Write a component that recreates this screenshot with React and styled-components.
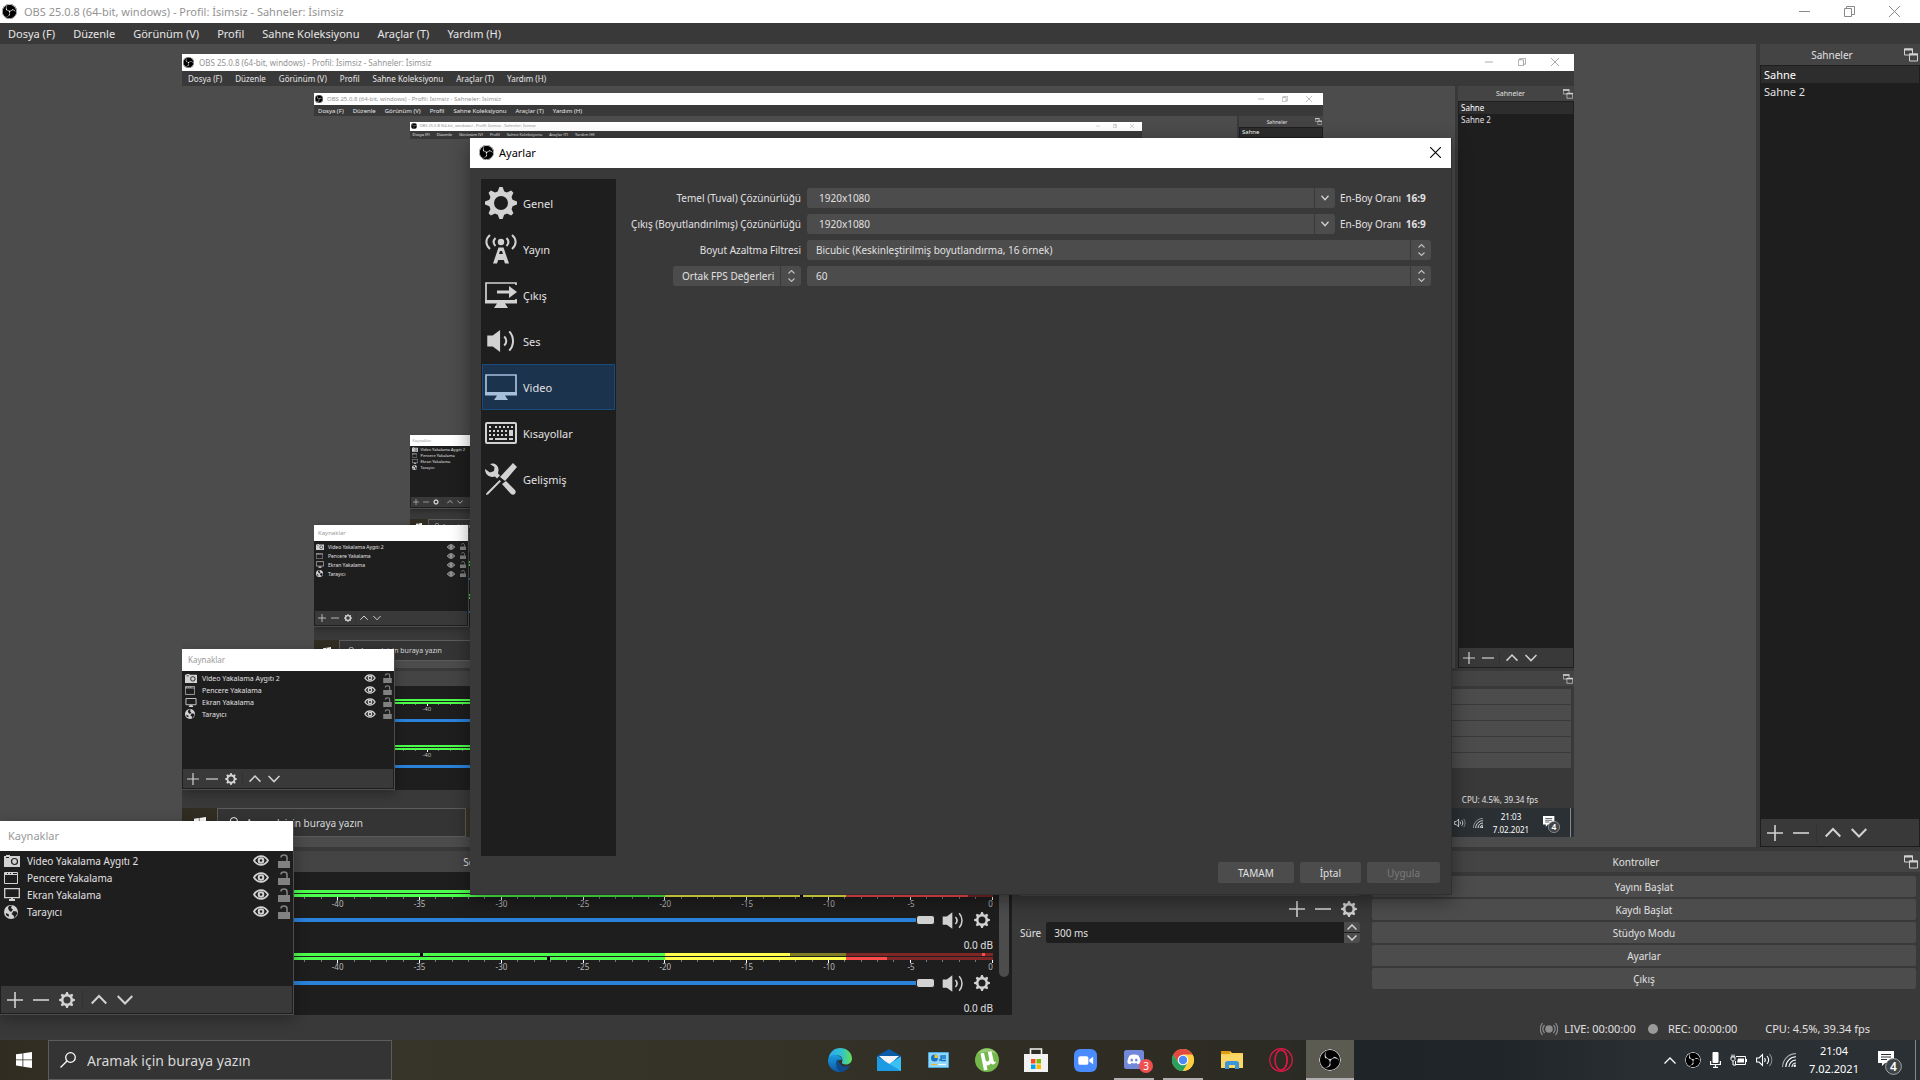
import React, { useId } from "react";
import styled, { createGlobalStyle, css, ThemeProvider, useTheme } from "styled-components";
import { SiObsstudio } from "react-icons/si";

/* Every desktop is drawn at a zoom level; px() turns a full-size length into
   whole pixels at the level of the desktop that it is used in. */
const px = (...ns) => (p) => ns.map((n) => `${p.theme.s(n)}px`).join(" ");
const makeTheme = (level) => {
  const k = Math.pow(0.725, level);
  return { level, s: (n) => (n === 0 ? 0 : Math.sign(n) * Math.max(1, Math.round(Math.abs(n) * k))) };
};

const color = {
  panel: "#3a393a",
  canvas: "#4c4c4c",
  dark: "#1f1e1f",
  header: "#444444",
  text: "#e1e0e1",
  icon: "#d2d2d2",
};

const Global = createGlobalStyle`
  *, *::before, *::after { box-sizing: border-box; }
  html, body { margin: 0; height: 100%; overflow: hidden; background: ${color.panel}; }
  #root { height: 100%; }
  button, input, select { font: inherit; color: inherit; border: 0; padding: 0; margin: 0; background: none; border-radius: 0; min-width: 0; outline: 0; }
  ul { list-style: none; margin: 0; padding: 0; }
  h1, h2 { margin: 0; font: inherit; }
  svg { display: block; flex: none; }
`;

/* ---------- shared parts ---------- */

const Svg = styled.svg`
  width: ${(p) => p.theme.s(p.$w)}px;
  height: ${(p) => p.theme.s(p.$h || p.$w)}px;
`;

const TextButton = styled.button`
  display: flex;
  align-items: center;
  justify-content: center;
  white-space: nowrap;
`;

const PushButton = styled(TextButton)`
  height: ${px(21)};
  background: ${color.canvas};
  color: ${color.text};
  border-radius: ${px(2)};
  font-size: ${px(10)};
  padding: ${px(0, 20)};
  &:disabled { color: #7a7a7a; }
`;

const teeth = [0, 45, 90, 135, 180, 225, 270, 315];
const Gear = ({ w }) => (
  <Svg $w={w} viewBox="0 0 32 32" fill="currentColor">
    {teeth.map((a) => (
      <path key={a} d="M14.400 0h3.200l2.600 7h-8.400z" transform={`rotate(${a} 16 16)`} />
    ))}
    <circle cx="16" cy="16" r="9.500" fill="none" stroke="currentColor" strokeWidth="5" />
  </Svg>
);
const Plus = () => <Svg $w={16} viewBox="0 0 16 16" stroke="currentColor" strokeWidth="1.600"><path d="M0 8h16M8 0v16" /></Svg>;
const Minus = () => <Svg $w={16} viewBox="0 0 16 16" stroke="currentColor" strokeWidth="1.600"><path d="M0 8h16" /></Svg>;
const Up = () => <Svg $w={16} viewBox="0 0 16 16" fill="none" stroke="currentColor" strokeWidth="2"><path d="M.7 11.500L8 4l7.300 7.500" /></Svg>;
const Down = () => <Svg $w={16} viewBox="0 0 16 16" fill="none" stroke="currentColor" strokeWidth="2"><path d="M.7 4L8 11.500 15.300 4" /></Svg>;
const Speaker = ({ w, h }) => (
  <Svg $w={w} $h={h} viewBox="0 0 32 24" fill="none" stroke="currentColor" strokeWidth="2.200">
    <path d="M1 6h6l8-6v24l-8-6H1z" fill="currentColor" stroke="none" />
    <path d="M19.500 7c3 3 3 7 0 10M25 1.500c5.500 6 5.500 15 0 21" />
  </Svg>
);

const LogoBox = styled.span`
  display: flex;
  flex: none;
  width: ${(p) => p.theme.s(p.$w)}px;
  height: ${(p) => p.theme.s(p.$w)}px;
  border-radius: 50%;
  background: #000;
  color: ${(p) => p.$ink || "#fff"};
  overflow: hidden;
  svg { width: 100%; height: 100%; }
`;
const Logo = ({ w = 15, ink }) => <LogoBox $w={w} $ink={ink}><SiObsstudio /></LogoBox>;

/* ---------- window title and menu ---------- */

const TitleBar = styled.header`
  display: flex;
  align-items: center;
  flex: none;
  height: ${px(23)};
  padding: ${px(0, 20, 1, 2)};
  background: #fff;
  color: #939393;
  h1 { flex: 1; margin-left: ${px(7)}; font-size: ${px(11)}; white-space: nowrap; }
`;
const WindowControls = styled.div`
  display: flex;
  align-items: center;
  gap: ${px(34)};
  button { display: flex; }
`;
const MenuBar = styled.nav`
  display: flex;
  align-items: center;
  flex: none;
  gap: ${px(18)};
  height: ${px(21)};
  padding: ${px(0, 8)};
  background: ${color.panel};
  color: #e6e6e6;
  font-size: ${px(11)};
`;

function MainTitle() {
  return (
    <TitleBar>
      <Logo />
      <h1>OBS 25.0.8 (64-bit, windows) - Profil: İsimsiz - Sahneler: İsimsiz</h1>
      <WindowControls>
        <button aria-label="Simge durumuna küçült"><Svg $w={11} viewBox="0 0 11 11" stroke="#8a8a8a"><path d="M0 5.500h11" /></Svg></button>
        <button aria-label="Önceki boyut"><Svg $w={11} viewBox="0 0 11 11" fill="none" stroke="#8a8a8a"><path d="M.5 2.500h7v8h-7zM2.500 2.500v-2h8v8h-3" /></Svg></button>
        <button aria-label="Kapat"><Svg $w={11} viewBox="0 0 11 11" stroke="#8a8a8a"><path d="M0 0l11 11M11 0L0 11" /></Svg></button>
      </WindowControls>
    </TitleBar>
  );
}

const menus = ["Dosya (F)", "Düzenle", "Görünüm (V)", "Profil", "Sahne Koleksiyonu", "Araçlar (T)", "Yardım (H)"];

/* ---------- docks ---------- */

const Dock = styled.section`
  display: flex;
  flex-direction: column;
  min-width: 0;
  min-height: 0;
`;
const DockHeader = styled.header`
  display: flex;
  align-items: center;
  flex: none;
  height: ${px(21)};
  background: ${color.header};
  color: ${color.text};
  font-size: ${px(10)};
  h2 { flex: 1; text-align: center; white-space: nowrap; }
  button { display: flex; margin-right: ${px(2)}; }
`;
function DockTitle({ children }) {
  return (
    <DockHeader>
      <h2>{children}</h2>
      <button aria-label="Ayır">
        <Svg $w={14} viewBox="0 0 14 14" fill="none" stroke="#d2d2d2">
          <path d="M.5 1h8v6h-8z" /><path d="M0 1.500h9" strokeWidth="2" />
          <path d="M5.500 6h8v7h-8z" fill="#444" /><path d="M5 6.500h9" strokeWidth="2" />
        </Svg>
      </button>
    </DockHeader>
  );
}

const Toolbar = styled.div`
  display: flex;
  align-items: center;
  flex: none;
  gap: ${px(10)};
  height: ${px(28)};
  padding: ${px(0, 6)};
  border: 1px solid ${color.dark};
  border-top: 0;
  background: ${color.panel};
  color: ${color.icon};
  button { display: flex; }
`;
const Divider = styled.span`
  width: 2px;
  height: ${px(19)};
  margin: ${px(0, -3)};
  border-left: 1px solid #323232;
`;

const SceneList = styled.ul`
  flex: 1;
  padding: 1px;
  background: ${color.dark};
  color: ${color.text};
  font-size: ${px(11)};
`;
const SceneButton = styled.button`
  display: block;
  width: 100%;
  height: ${px(17)};
  line-height: ${px(17)};
  padding: ${px(0, 3)};
  text-align: left;
  background: ${(p) => (p.$current ? "#2d2d2d" : "transparent")};
  color: ${(p) => (p.$current ? "#fff" : "inherit")};
`;

const Workspace = styled.div`
  display: flex;
  flex: 1;
  min-height: 0;
  gap: ${px(4)};
`;
const Preview = styled.div`
  display: flex;
  align-items: center;
  justify-content: center;
  flex: 1;
  min-width: 0;
  background: ${color.canvas};
  overflow: hidden;
`;
const ScenesDock = styled(Dock)`
  width: ${px(160)};
`;
const BottomDocks = styled.div`
  display: grid;
  grid-template-columns: 1012fr 348fr 552fr;
  gap: ${px(4)};
  height: ${px(164)};
  margin-top: ${px(4)};
  flex: none;
`;

/* ---------- mixer ---------- */

const MixerBody = styled.div`
  display: flex;
  flex: 1;
  min-height: 0;
  padding: ${px(0, 3, 0, 10)};
  gap: ${px(6)};
  background: ${color.dark};
  color: ${color.text};
  overflow: hidden;
`;
const Channels = styled.div`
  display: flex;
  flex-direction: column;
  flex: 1;
  min-width: 0;
`;
const ScrollThumb = styled.span`
  width: ${px(10)};
  height: ${px(105)};
  border-radius: ${px(5)};
  background: ${color.canvas};
`;
const Channel = styled.div`
  display: flex;
  flex-direction: column;
  flex: none;
  height: ${px(63)};
`;
const Decibels = styled.output`
  display: block;
  flex: none;
  height: ${px(18)};
  line-height: ${px(20)};
  font-size: ${px(10)};
  text-align: right;
`;
const Bars = styled.div`
  display: grid;
  gap: 1px;
  span { height: ${px(3)}; }
`;
const Ticks = styled.div`
  display: flex;
  justify-content: space-between;
  align-items: flex-start;
  height: ${px(3)};
`;
const Tick = styled.span`
  width: 1px;
  height: ${(p) => p.theme.s(p.$major ? 3 : 2)}px;
  background: ${(p) => (p.$major ? "#ffffff" : "#7a7a7a")};
`;
const Scale = styled.div`
  display: flex;
  justify-content: space-between;
  height: ${px(8)};
  line-height: ${px(8)};
  font-size: ${px(8)};
  color: #b8b8b8;
  span { display: flex; justify-content: center; width: 0; }
  span:last-child { justify-content: flex-end; }
`;
const VolumeRow = styled.div`
  display: flex;
  align-items: center;
  height: ${px(24)};
  gap: ${px(7)};
  padding-right: ${px(3)};
  color: ${color.icon};
  button { display: flex; }
  button:last-child { margin-left: ${px(3)}; }
`;
const Volume = styled.input`
  flex: 1;
  appearance: none;
  height: ${px(10)};
  &::-webkit-slider-runnable-track { height: ${px(4)}; background: #2a82da; }
  &::-webkit-slider-thumb {
    appearance: none;
    width: ${px(19)};
    height: ${px(10)};
    margin-top: ${px(-3)};
    border-radius: ${px(3)};
    border: 1px solid ${color.dark};
    background: ${color.icon};
  }
`;

const at = (db) => `${((60 + db) / 60) * 100}%`;
/* level: how far the bar is lit; peak: where its marker sits, and the marker's colour */
const barPaint = ({ level, peak }) => {
  const stops = [];
  const zones = [[-60, -20, "#4cff4c", "#267f26"], [-20, -9, "#ffff4c", "#7f7f26"], [-9, 0, "#ff4c4c", "#7f2626"]];
  zones.forEach(([from, to, lit, dim]) => {
    const mid = Math.min(Math.max(level, from), to);
    stops.push(`${lit} ${at(from)} ${at(mid)}`, `${dim} ${at(mid)} ${at(to)}`);
  });
  const layers = [`linear-gradient(90deg, ${stops.join(", ")})`];
  if (peak) {
    const [db, ink] = peak;
    layers.unshift(`linear-gradient(90deg, transparent ${at(db)}, ${ink} ${at(db)} ${at(db + 0.18)}, transparent ${at(db + 0.18)})`);
  }
  return { backgroundImage: layers.join(", ") };
};
const ClipMark = styled.i`
  display: block;
  width: ${px(3)};
  height: 100%;
  margin-left: auto;
  margin-right: ${px(8)};
  background: #ff4c4c;
`;
const channels = [
  { name: "Masaüstü Sesi", bars: [{ level: -3 }, { level: -4 + 2.5, peak: [-11.8, "#000"] }] },
  { name: "Mic/Aux", bars: [{ level: -12.4, peak: [-35, "#000"], clip: true }, { level: -6.5, peak: [-27.2, "#000"] }] },
];
const labels = Array.from({ length: 13 }, (_, i) => i * 5 - 60);

const MixerChannel = ({ name, bars }) => (
  <Channel>
    <Decibels>0.0 dB</Decibels>
    <Bars>{bars.map((b, i) => <span key={i} style={barPaint(b)}>{b.clip && <ClipMark />}</span>)}</Bars>
    <Ticks>{Array.from({ length: 61 }, (_, i) => <Tick key={i} $major={i % 5 === 0} />)}</Ticks>
    <Scale>{labels.map((l) => <span key={l}>{l}</span>)}</Scale>
    <VolumeRow>
      <Volume type="range" defaultValue="100" aria-label={name} />
      <button aria-label="Sessiz"><Speaker w={22} h={17} /></button>
      <button aria-label="Ses ayarları"><Gear w={16} /></button>
    </VolumeRow>
  </Channel>
);

const Transitions = styled.div`
  display: flex;
  flex-direction: column;
  gap: ${px(2)};
  padding: ${px(3, 4)};
  color: ${color.text};
`;
const TransitionTools = styled.div`
  display: flex;
  align-items: center;
  justify-content: flex-end;
  gap: ${px(10)};
  height: ${px(22)};
  padding-right: ${px(3)};
  color: ${color.icon};
  button { display: flex; }
`;
const DurationRow = styled.div`
  display: flex;
  align-items: center;
  gap: ${px(5)};
  height: ${px(21)};
  font-size: ${px(10)};
`;
const SpinBox = styled.div`
  display: flex;
  flex: 1;
  height: 100%;
  border-radius: ${px(2)};
  overflow: hidden;
  background: ${color.dark};
  input { flex: 1; padding-left: ${px(8)}; }
`;
const SpinButtons = styled.div`
  display: grid;
  grid-template-rows: 1fr 1fr;
  gap: 1px;
  width: ${px(16)};
  button { display: grid; place-items: center; background: ${color.canvas}; color: ${color.icon}; }
`;
const ControlsBody = styled.div`
  display: flex;
  flex-direction: column;
  gap: ${px(2)};
  padding: ${px(4)};
`;

/* ---------- status bar ---------- */

const StatusBar = styled.footer`
  display: flex;
  align-items: center;
  justify-content: flex-end;
  flex: none;
  height: ${px(25)};
  padding: ${px(2, 50, 0, 0)};
  color: ${color.text};
  font-size: ${px(11)};
  white-space: nowrap;
`;
const StatusItem = styled.span`
  display: flex;
  align-items: center;
  gap: ${(p) => p.theme.s(p.$gap || 0)}px;
  margin-left: ${(p) => p.theme.s(p.$before || 0)}px;
`;

/* ---------- taskbar ---------- */

const TaskBar = styled.footer`
  display: flex;
  flex: none;
  height: ${px(40)};
  color: #fff;
  background: linear-gradient(90deg, #302c21 0%, #37342a 10%, #353328 40%, #2f2d23 55%, #2d2c24 67%, #1e2428 71%, #202529 78%, #2a2f33 86%, #2b3034 100%);
`;
const StartButton = styled(TextButton)`
  width: ${px(48)};
`;
const SearchBox = styled.label`
  display: flex;
  align-items: center;
  gap: ${px(11)};
  width: ${px(344)};
  padding: ${px(0, 11)};
  border: 1px solid #5c5c5b;
  background: #343434;
  color: #d8d8d8;
  font-size: ${px(14)};
  input { flex: 1; &::placeholder { color: #d8d8d8; opacity: 1; } }
`;
const Pinned = styled.div`
  display: flex;
  flex: 1;
  gap: ${px(1)};
  padding-left: ${px(424)};
`;
const AppButton = styled(TextButton)`
  position: relative;
  flex: none;
  width: ${px(48)};
  background: ${(p) => (p.$active ? "#5c5b51" : "transparent")};
  ${(p) => (p.$open || p.$active) && css`
    &::after {
      content: "";
      position: absolute;
      bottom: 0;
      left: ${p.theme.s(p.$active ? 0 : 4)}px;
      right: ${p.theme.s(p.$active ? 0 : 4)}px;
      height: ${p.theme.s(2)}px;
      background: #b3aeb2;
    }
  `}
`;
const Badge = styled.span`
  position: absolute;
  right: ${px(5)};
  bottom: ${px(7)};
  width: ${px(14)};
  height: ${px(14)};
  line-height: ${px(14)};
  border-radius: 50%;
  background: #f04f50;
  font-size: ${px(10)};
  text-align: center;
`;
const Tray = styled.div`
  display: flex;
  align-items: center;
  gap: ${px(9)};
`;
const Clock = styled.time`
  width: ${px(58)};
  line-height: ${px(18)};
  text-align: center;
  font-size: ${px(11)};
`;
const ActionCenter = styled(TextButton)`
  margin-left: ${px(6)};
  margin-right: ${px(4)};
  padding-top: ${px(6)};
`;
const ShowDesktop = styled.button`
  align-self: stretch;
  width: ${px(5)};
  border-left: 1px solid #85888a;
`;

const EdgeIcon = () => {
  const id = useId();
  return (
    <Svg $w={24} viewBox="0 0 24 24">
      <defs>
        <linearGradient id={`${id}a`}><stop offset=".2" stopColor="#2fb0ea" /><stop offset=".6" stopColor="#34c6c4" /><stop offset="1" stopColor="#66df52" /></linearGradient>
        <linearGradient id={`${id}b`} x2="0" y2="1"><stop stopColor="#1b9de2" /><stop offset="1" stopColor="#0c59a4" /></linearGradient>
      </defs>
      <path d="M.6 10C1.800 4 6.400 0 12 0c7 0 12 5 12 10.500 0 3.500-2.500 6-6 6-3 0-4.500-1.200-4-2.200C15.500 11 13.500 7.500 9.500 7.200 5.500 7 2 8 .6 10z" fill={`url(#${id}a)`} />
      <path d="M0 12c.5-4 4.500-5.800 8.500-5 3.500.6 5.500 3 5.500 5-5-2-7 6 0 9.500l1.500 1.800C14 24 13 24 12 24 5 24-.5 18.500 0 12z" fill={`url(#${id}b)`} />
      <path d="M8 15c0-2 1.200-3.500 2.500-4-1 4 3.500 8 8 7.500 1.500-.2 2.500-1 3.500-1-2 4-6 6.500-10 6.500-2.500-1.500-4-5-4-9z" fill="#114a8b" />
    </Svg>
  );
};

const apps = [
  ["Edge", EdgeIcon],
  ["Posta", () => (
    <Svg $w={24} $h={22} viewBox="0 0 24 22">
      <path d="M0 7L12 0l12 7v15H0z" fill="#0a5ba8" />
      <path d="M2 7h20L12 16z" fill="#f4f4f8" />
      <path d="M0 7.500L12 15l12-7.500V22H0z" fill="#39c0f5" />
      <path d="M0 7.500L24 22H0z" fill="#1d9ae4" />
    </Svg>)],
  ["Denetim Masası", () => (
    <Svg $w={21} $h={16} viewBox="0 0 21 16">
      <rect width="21" height="16" rx="1" fill="#4aa9e0" /><rect x="1" y="1" width="19" height="14" fill="#8ed6fb" />
      <circle cx="6.500" cy="6" r="3.500" fill="#1673c4" /><path d="M6.500 6V2.500A3.500 3.500 0 0 1 10 6z" fill="#fbc02d" />
      <path d="M11 8h2V4h5M13 6h5M13 8.500h5" stroke="#1673c4" strokeWidth="1.300" fill="none" />
      <path d="M3 12.500h6" stroke="#f5b32f" strokeWidth="1.200" /><path d="M10 12.500h8" stroke="#e8fbff" strokeWidth="1.200" />
    </Svg>)],
  ["µTorrent", () => (
    <Svg $w={24} viewBox="0 0 24 24">
      <circle cx="12" cy="12" r="12" fill="#74b74a" /><path d="M2 6a12 12 0 0 1 20 0C17 4 8 3 2 6z" fill="#97cb75" />
      <path d="M5.500 5.500l3.500-.8 1.500 7c.6 2.800 4.200 2 3.600-1.200L12.800 4l3.700-.8 2 9c.4 1.500 1 2 2.500 1.600-.3 2.400-3.600 3.700-5.200 1.400-1 2-2.800 2.500-4.300 2l1 4.500-3.500.8z" fill="#fff" />
    </Svg>)],
  ["Microsoft Store", () => (
    <Svg $w={24} viewBox="0 0 24 24">
      <path d="M6.500 8V1h11v7" fill="none" stroke="#f2f2f2" strokeWidth="1.600" /><path d="M0 6h24v18H0z" fill="#f2f2f2" />
      <path d="M7 11h4.500v4.500H7z" fill="#f25022" /><path d="M12.500 11H17v4.500h-4.500z" fill="#7fba00" />
      <path d="M7 16.500h4.500V21H7z" fill="#00a4ef" /><path d="M12.500 16.500H17V21h-4.500z" fill="#ffb900" />
    </Svg>)],
  ["Zoom", () => (
    <Svg $w={23} viewBox="0 0 24 24">
      <rect width="24" height="24" rx="6.500" fill="#4a8cff" /><rect x="4.500" y="7.500" width="10.500" height="9" rx="2" fill="#fff" /><path d="M16 11l4-3v8l-4-3z" fill="#fff" />
    </Svg>)],
  ["Discord", () => (
    <Svg $w={20} viewBox="0 0 20 20">
      <rect width="20" height="19" rx="2.500" fill="#7289da" />
      <path d="M5.500 5.500c3-1.300 6-1.300 9 0 1.500 2.500 2.200 5 2 7.500-1 .8-2 1.200-3 1.300l-.8-1.200c-2 .5-3.400.5-5.400 0l-.8 1.200c-1-.1-2-.5-3-1.300-.2-2.500.5-5 2-7.500z" fill="#fff" />
      <ellipse cx="7.700" cy="10" rx="1.300" ry="1.500" fill="#7289da" /><ellipse cx="12.300" cy="10" rx="1.300" ry="1.500" fill="#7289da" />
    </Svg>), { open: true, badge: "3" }],
  ["Chrome", () => (
    <Svg $w={22} viewBox="0 0 24 24">
      <circle cx="12" cy="12" r="12" fill="#fdcf3f" />
      <path d="M1.600 6A12 12 0 0 1 22.400 6H12z" fill="#e14b3f" /><path d="M1.600 6a12 12 0 0 1 10.400-6v6.500L6.800 15z" fill="#e14b3f" />
      <path d="M1.600 6A12 12 0 0 0 12 24l5.200-9H6.800z" fill="#27a060" /><path d="M12 6.500h10.600A12 12 0 0 1 12 24l5-9z" fill="#fdcf3f" />
      <circle cx="12" cy="12" r="5.800" fill="#fff" /><circle cx="12" cy="12" r="4.600" fill="#4c8bf5" />
    </Svg>), { open: true }],
  ["Dosya Gezgini", () => (
    <Svg $w={22} $h={18} viewBox="0 0 22 18">
      <path d="M0 0h9l2 2h11v15H0z" fill="#f9cf54" /><path d="M0 0h9v3H0z" fill="#e09c10" /><path d="M0 4h22v13H0z" fill="#fcd768" />
      <path d="M4 18v-6.500L6 10h10l2 1.500V18h-4v-4H8v4z" fill="#3a97d8" />
    </Svg>)],
  ["Opera", () => (
    <Svg $w={24} viewBox="0 0 24 24" fill="none" stroke="#e01848">
      <circle cx="12" cy="12" r="11.300" strokeWidth="1.200" /><ellipse cx="12" cy="12" rx="6" ry="10" strokeWidth="1.400" /><path d="M13 2c7 3 7 17 0 20" strokeWidth="1.200" />
    </Svg>)],
  ["OBS Studio", () => <Logo w={22} ink="#cfcfcf" />, { active: true }],
];

const ArrowUp = () => <Svg $w={12} $h={7} viewBox="0 0 12 7" fill="none" stroke="#fff" strokeWidth="1.300"><path d="M.5 6.500L6 1l5.500 5.500" /></Svg>;

function Taskbar({ time }) {
  return (
    <TaskBar>
      <StartButton aria-label="Başlat">
        <Svg $w={16} viewBox="0 0 16 16" fill="#fff"><path d="M0 2.300L6.500 1.400V7.500H0zM7.300 1.300L16 0v7.500H7.300zM0 8.300h6.500v6.200L0 13.600zM7.300 8.300H16V16l-8.700-1.300z" /></Svg>
      </StartButton>
      <SearchBox>
        <Svg $w={16} viewBox="0 0 16 16" fill="none" stroke="#fff" strokeWidth="1.300"><circle cx="10.500" cy="5.500" r="4.800" /><path d="M7 9L.5 15.500" /></Svg>
        <input placeholder="Aramak için buraya yazın" aria-label="Ara" />
      </SearchBox>
      <Pinned>
        {apps.map(([name, Icon, o = {}]) => (
          <AppButton key={name} aria-label={name} $open={o.open} $active={o.active}>
            <Icon />
            {o.badge && <Badge>{o.badge}</Badge>}
          </AppButton>
        ))}
      </Pinned>
      <Tray>
        <ArrowUp />
        <Logo w={16} />
        <Svg $w={11} $h={16} viewBox="0 0 11 16" fill="#fff"><rect x="2.500" width="6" height="11" rx="1" /><path d="M.6 9v3.500h9.800V9M5.500 12.500V15M3 15.300h5" fill="none" stroke="#fff" strokeWidth="1.200" /></Svg>
        <Svg $w={17} $h={12} viewBox="0 0 17 12" fill="none" stroke="#fff"><path d="M6 2.500h9.500v8h-10V7" /><path d="M8 4.500h6v4H7z" fill="#fff" stroke="none" /><path d="M16.500 5v3M1 3h4v2.500L3.500 7H2.500L1 5.500zM2 3V.5M4 3V.5M3 7v4h3" /></Svg>
        <Svg $w={17} $h={14} viewBox="0 0 17 14" fill="none" stroke="#fff" strokeWidth="1.100"><path d="M.6 5h2.500L6.500 1.500v11L3.100 9H.6zM8.500 5c1 1.200 1 2.800 0 4M11 3c2 2.400 2 5.600 0 8" /><path d="M13.500 1c3 3.600 3 8.400 0 12" opacity=".5" /></Svg>
        <Svg $w={14} viewBox="0 0 14 14" fill="none" stroke="#fff" strokeWidth="1.100"><path d="M.6 14C.6 6.600 6.600.6 14 .6" opacity=".6" /><path d="M3.800 14C3.800 8.400 8.400 3.800 14 3.800M7 14c0-3.900 3.100-7 7-7M10 14c0-2.200 1.800-4 4-4" /><circle cx="12.800" cy="12.800" r="1.200" fill="#fff" stroke="none" /></Svg>
        <Clock>{time}<br />7.02.2021</Clock>
        <ActionCenter aria-label="Bildirimler">
          <Svg $w={24} viewBox="0 0 24 24">
            <path d="M0 0h16v12H7l-3 3v-3H0z" fill="#fff" /><path d="M3 3.500h10M3 6h10M3 8.500h6" stroke="#2a2f33" />
            <circle cx="15.500" cy="15.500" r="7.900" fill="#3f4447" stroke="#a4a6a7" />
            <text x="15.500" y="20" textAnchor="middle" fill="#fff" fontSize="12" fontWeight="600">4</text>
          </Svg>
        </ActionCenter>
        <ShowDesktop aria-label="Masaüstünü göster" />
      </Tray>
    </TaskBar>
  );
}

/* ---------- sources window ---------- */

const SourcesWindow = styled.section`
  position: absolute;
  left: 0;
  bottom: ${px(65)};
  display: flex;
  flex-direction: column;
  width: ${px(294)};
  height: ${px(194)};
  border: 1px solid #4d4d4d;
  border-width: 0 1px 1px 0;
  background: ${color.dark};
  box-shadow: 0 ${px(4)} ${px(14)} rgba(0, 0, 0, 0.3);
  h2 {
    flex: none;
    height: ${px(30)};
    line-height: ${px(30)};
    padding-left: ${px(8)};
    background: #fff;
    color: #999999;
    font-size: ${px(11)};
  }
  ul { flex: 1; padding-top: ${px(1)}; }
`;
const SourceRow = styled.li`
  display: flex;
  align-items: center;
  height: ${px(17)};
  padding: ${px(0, 3, 0, 4)};
  color: ${color.icon};
  button { display: flex; }
`;
const SourceIcon = styled.span`
  display: flex;
  flex: none;
  width: ${px(23)};
`;
const SourceName = styled.span`
  flex: 1;
  white-space: nowrap;
  color: ${color.text};
  font-size: ${px(10)};
`;
const LockButton = styled.button`
  margin-left: ${px(9)};
  color: #818181;
`;
const sources = [
  ["Video Yakalama Aygıtı 2", <Svg $w={16} $h={12} viewBox="0 0 16 12" fill="currentColor"><path d="M0 1h2V0h4v1h10v11H0z" /><circle cx="10.500" cy="6.500" r="3" fill="none" stroke="#1f1f1f" strokeWidth="1.200" /><path d="M2 2.500h3" stroke="#1f1f1f" /></Svg>],
  ["Pencere Yakalama", <Svg $w={14} $h={12} viewBox="0 0 14 12" fill="none" stroke="currentColor"><path d="M.5.5h13v11H.5zM.5 2.500h13" /><path d="M1 1.500h8" strokeDasharray="2 1" /></Svg>],
  ["Ekran Yakalama", <Svg $w={16} $h={13} viewBox="0 0 16 13" fill="none" stroke="currentColor"><path d="M.7.7h14.600v9H.7z" strokeWidth="1.300" /><path d="M5 12h6M8 10v2" strokeWidth="2" /></Svg>],
  ["Tarayıcı", <Svg $w={14} viewBox="0 0 14 14"><circle cx="7" cy="7" r="7" fill="currentColor" /><path d="M5 1l3-.5L7 3l2 1.500L7 7 5 5.500 4 3zM9.500 6l3 .5 1 2-3 4.500-1-2.500-2-1.500zM2 8l3 1.500L4.500 12 2 10z" fill="#1f1f1f" /></Svg>],
];

function Sources() {
  return (
    <SourcesWindow>
      <h2>Kaynaklar</h2>
      <ul>
        {sources.map(([name, icon]) => (
          <SourceRow key={name}>
            <SourceIcon>{icon}</SourceIcon>
            <SourceName>{name}</SourceName>
            <button aria-label={`${name} görünür`}>
              <Svg $w={16} $h={11} viewBox="0 0 16 11" fill="none" stroke="currentColor"><path d="M1 5.500C4.500-.3 11.500-.3 15 5.500 11.500 11.300 4.500 11.300 1 5.500z" strokeWidth="1.800" /><circle cx="8" cy="5.500" r="2.300" strokeWidth="2" /></Svg>
            </button>
            <LockButton aria-label={`${name} kilidi`}>
              <Svg $w={12} $h={14} viewBox="0 0 12 14" fill="currentColor"><path d="M0 7h12v7H0z" /><path d="M3 3.500C3 .2 9 .2 9 3.500V7" fill="none" stroke="currentColor" strokeWidth="1.600" /></Svg>
            </LockButton>
          </SourceRow>
        ))}
      </ul>
      <Toolbar>
        <button aria-label="Ekle"><Plus /></button>
        <button aria-label="Kaldır"><Minus /></button>
        <button aria-label="Özellikler"><Gear w={16} /></button>
        <Divider />
        <button aria-label="Yukarı"><Up /></button>
        <button aria-label="Aşağı"><Down /></button>
      </Toolbar>
    </SourcesWindow>
  );
}

/* ---------- settings dialog ---------- */

const Dialog = styled.section`
  position: absolute;
  left: 470px;
  top: 138px;
  display: flex;
  flex-direction: column;
  width: 982px;
  height: 757px;
  border: 1px solid #303030;
  border-width: 0 1px 1px 0;
  background: ${color.panel};
  color: ${color.text};
  box-shadow: 0 5px 18px rgba(0, 0, 0, 0.4);
`;
const DialogTitle = styled.header`
  display: flex;
  align-items: center;
  flex: none;
  height: 30px;
  padding: 0 10px 2px 9px;
  background: #fff;
  color: #000;
  h2 { flex: 1; margin-left: 5px; font-size: 11px; }
  button { display: flex; }
`;
const DialogBody = styled.div`
  display: flex;
  flex: 1;
  gap: 11px;
  padding: 11px 20px 0 11px;
  min-height: 0;
`;
const Categories = styled.ul`
  flex: none;
  width: 135px;
  padding: 1px;
  background: ${color.dark};
`;
const CategoryButton = styled.button`
  display: flex;
  align-items: center;
  gap: 6px;
  width: 100%;
  height: 46px;
  padding: 0 2px;
  font-size: 11px;
  border: 1px solid ${(p) => (p.$current ? "#184a7d" : "transparent")};
  background: ${(p) => (p.$current ? "#1b334c" : "transparent")};
  svg { color: ${(p) => (p.$current ? "#a5bfdb" : color.icon)}; }
`;
const Form = styled.form`
  display: grid;
  grid-template-columns: 174px minmax(0, 1fr);
  grid-auto-rows: 20px;
  gap: 6px;
  align-content: start;
  flex: 1;
  padding-top: 9px;
  font-size: 10px;
`;
const FieldLabel = styled.label`
  align-self: center;
  text-align: right;
  white-space: nowrap;
`;
const FieldRow = styled.div`
  display: flex;
  align-items: center;
  gap: 5px;
  b { margin-left: 2px; }
  > span { white-space: nowrap; width: 91px; }
`;
const Field = styled.div`
  display: flex;
  flex: 1;
  height: 20px;
  border-radius: 3px;
  background: ${color.canvas};
  overflow: hidden;
  input { flex: 1; padding-left: 12px; }
  select { flex: 1; appearance: none; padding-left: 9px; }
`;
const FieldArrow = styled.span`
  display: grid;
  place-items: center;
  width: 21px;
  border-left: 1px solid ${color.panel};
`;
const ModeField = styled(Field)`
  justify-self: end;
  width: 128px;
`;
const DialogButtons = styled.footer`
  display: flex;
  justify-content: flex-end;
  gap: 6px;
  padding: 6px 11px 11px;
`;

const Chevron = () => <Svg $w={8} $h={6} viewBox="0 0 8 6" fill="none" stroke="#d2d2d2" strokeWidth="1.300"><path d="M.5.8L4 4.800 7.500.8" /></Svg>;
const UpDown = () => <Svg $w={7} $h={12} viewBox="0 0 7 12" fill="none" stroke="#c0c0c0" strokeWidth="1.100"><path d="M.5 3.500l3-3 3 3M.5 8.500l3 3 3-3" /></Svg>;

const Monitor = ({ children, frame }) => (
  <Svg $w={32} $h={26} viewBox="0 0 32 26" fill="none" stroke="currentColor" strokeWidth="1.700">
    <path d={frame} /><path d="M0 18h32v3.500H0zM12 21.500h8l3 4.500H9z" fill="currentColor" stroke="none" />
    {children}
  </Svg>
);
const categories = [
  ["Genel", <Gear w={32} />],
  ["Yayın", (
    <Svg $w={32} $h={30} viewBox="0 0 32 30" fill="none" stroke="currentColor" strokeWidth="2">
      <circle cx="16" cy="8" r="3.200" fill="currentColor" stroke="none" />
      <path d="M10.500 4c-2.300 2.400-2.300 5.600 0 8M21.500 4c2.300 2.400 2.300 5.600 0 8M5 1C.2 5 .2 11 5 15M27 1c4.800 4 4.800 10 0 14" />
      <path d="M13.500 13.500h5L24 29.500h-4l-1.200-3.500h-5.600L12 29.500H8zM15 17l-1 3h4l-1-3z" fill="currentColor" stroke="none" fillRule="evenodd" />
    </Svg>)],
  ["Çıkış", <Monitor frame="M31 3V1H1v19h30v-3"><path d="M12 10h14" strokeWidth="3" /><path d="M24 4l8 6-8 6z" fill="currentColor" stroke="none" /></Monitor>],
  ["Ses", <Speaker w={32} h={22} />],
  ["Video", <Monitor frame="M1 1h30v19H1z" />],
  ["Kısayollar", (
    <Svg $w={32} $h={22} viewBox="0 0 32 22" fill="none" stroke="currentColor" strokeWidth="2">
      <rect x="1" y="1" width="30" height="20" rx="1" />
      <path d="M4 5h4M10 5h18M4 9h20M4 13h20" strokeDasharray="2 2" /><path d="M4 17h4M10 17h12M24 17h4" /><path d="M26 8v6" strokeWidth="4" />
    </Svg>)],
  ["Gelişmiş", (
    <Svg $w={32} viewBox="0 0 32 32" fill="currentColor">
      <path d="M0 6l5 3.500 4-1.500.5-4L5 1c4-2 9 1 8.500 6.500l-.5 3 2 2-3 3-2-2C5 15 0 12 0 6z" />
      <path d="M28 0l4 4-12 14-5-4zM14.500 17l1.500 1.300L3 31.500 1 32l.5-2zM17 21l4-3 9 9c2 3-1 6-4 4z" />
    </Svg>)],
];

function Settings() {
  return (
    <Dialog role="dialog" aria-label="Ayarlar">
      <DialogTitle>
        <Logo />
        <h2>Ayarlar</h2>
        <button aria-label="Kapat"><Svg $w={11} viewBox="0 0 11 11" stroke="#000" strokeWidth="1.100"><path d="M0 0l11 11M11 0L0 11" /></Svg></button>
      </DialogTitle>
      <DialogBody>
        <Categories>
          {categories.map(([name, icon]) => (
            <li key={name}><CategoryButton $current={name === "Video"}>{icon}{name}</CategoryButton></li>
          ))}
        </Categories>
        <Form>
          <FieldLabel htmlFor="base">Temel (Tuval) Çözünürlüğü</FieldLabel>
          <FieldRow>
            <Field><input id="base" defaultValue="1920x1080" /><FieldArrow><Chevron /></FieldArrow></Field>
            <span>En-Boy Oranı <b>16:9</b></span>
          </FieldRow>
          <FieldLabel htmlFor="output">Çıkış (Boyutlandırılmış) Çözünürlüğü</FieldLabel>
          <FieldRow>
            <Field><input id="output" defaultValue="1920x1080" /><FieldArrow><Chevron /></FieldArrow></Field>
            <span>En-Boy Oranı <b>16:9</b></span>
          </FieldRow>
          <FieldLabel htmlFor="filter">Boyut Azaltma Filtresi</FieldLabel>
          <Field>
            <select id="filter"><option>Bicubic (Keskinleştirilmiş boyutlandırma, 16 örnek)</option></select>
            <FieldArrow><UpDown /></FieldArrow>
          </Field>
          <ModeField>
            <select aria-label="FPS türü"><option>Ortak FPS Değerleri</option></select>
            <FieldArrow><UpDown /></FieldArrow>
          </ModeField>
          <Field>
            <select aria-label="FPS"><option>60</option></select>
            <FieldArrow><UpDown /></FieldArrow>
          </Field>
        </Form>
      </DialogBody>
      <DialogButtons>
        <PushButton>TAMAM</PushButton>
        <PushButton>İptal</PushButton>
        <PushButton disabled>Uygula</PushButton>
      </DialogButtons>
    </Dialog>
  );
}

/* ---------- desktop ---------- */

const Screen = styled.div`
  position: relative;
  display: flex;
  flex-direction: column;
  flex: none;
  width: ${(p) => (p.theme.level ? px(1920)(p) : "100%")};
  height: ${(p) => (p.theme.level ? px(1080)(p) : "100vh")};
  background: ${color.panel};
  font-family: "Noto Sans", "Open Sans", sans-serif;
  overflow: hidden;
`;

const LAST_LEVEL = 3;

function Desktop() {
  const { level } = useTheme();
  return (
    <Screen>
      <MainTitle />
      <MenuBar>{menus.map((m) => <TextButton key={m}>{m}</TextButton>)}</MenuBar>
      <Workspace>
        <Preview>{level < LAST_LEVEL && <Level n={level + 1} />}</Preview>
        <ScenesDock>
          <DockTitle>Sahneler</DockTitle>
          <SceneList>
            <li><SceneButton $current>Sahne</SceneButton></li>
            <li><SceneButton>Sahne 2</SceneButton></li>
          </SceneList>
          <Toolbar>
            <button aria-label="Ekle"><Plus /></button>
            <button aria-label="Kaldır"><Minus /></button>
            <Divider />
            <button aria-label="Yukarı"><Up /></button>
            <button aria-label="Aşağı"><Down /></button>
          </Toolbar>
        </ScenesDock>
      </Workspace>
      <BottomDocks>
        <Dock>
          <DockTitle>Ses Karıştırıcısı</DockTitle>
          <MixerBody>
            <Channels>
              {channels.map((c) => <MixerChannel key={c.name} {...c} />)}
              <Decibels>0.0 dB</Decibels>
            </Channels>
            <ScrollThumb />
          </MixerBody>
        </Dock>
        <Dock>
          <DockTitle>Sahne Geçişleri</DockTitle>
          <Transitions>
            <PushButton>Geçiş</PushButton>
            <TransitionTools>
              <button aria-label="Geçiş ekle"><Plus /></button>
              <button aria-label="Geçişi kaldır"><Minus /></button>
              <button aria-label="Geçiş ayarları"><Gear w={16} /></button>
            </TransitionTools>
            <DurationRow>
              <label htmlFor={`duration${level}`}>Süre</label>
              <SpinBox>
                <input id={`duration${level}`} defaultValue="300 ms" />
                <SpinButtons>
                  <button aria-label="Artır"><Svg $w={10} $h={6} viewBox="0 0 10 6" fill="none" stroke="currentColor" strokeWidth="1.500"><path d="M.5 5.500L5 1l4.500 4.500" /></Svg></button>
                  <button aria-label="Azalt"><Svg $w={10} $h={6} viewBox="0 0 10 6" fill="none" stroke="currentColor" strokeWidth="1.500"><path d="M.5.5L5 5 9.500.5" /></Svg></button>
                </SpinButtons>
              </SpinBox>
            </DurationRow>
          </Transitions>
        </Dock>
        <Dock>
          <DockTitle>Kontroller</DockTitle>
          <ControlsBody>
            {["Yayını Başlat", "Kaydı Başlat", "Stüdyo Modu", "Ayarlar", "Çıkış"].map((t) => <PushButton key={t}>{t}</PushButton>)}
          </ControlsBody>
        </Dock>
      </BottomDocks>
      <StatusBar>
        <StatusItem $gap={6}>
          <Svg $w={18} $h={14} viewBox="0 0 18 14" fill="none" stroke="#8c8c8c" strokeWidth="1.200"><circle cx="9" cy="7" r="3.800" fill="#8c8c8c" stroke="none" /><path d="M4.500 3c-2 2.400-2 5.600 0 8M13.500 3c2 2.400 2 5.600 0 8M2.500 1c-2.700 3.600-2.700 8.400 0 12M15.500 1c2.700 3.600 2.700 8.400 0 12" /></Svg>
          LIVE: 00:00:00
        </StatusItem>
        <StatusItem $gap={10} $before={12}>
          <Svg $w={10} viewBox="0 0 10 10"><circle cx="5" cy="5" r="5" fill="#9a9a9a" /></Svg>
          REC: 00:00:00
        </StatusItem>
        <StatusItem $before={28}>CPU: 4.5%, 39.34 fps</StatusItem>
      </StatusBar>
      <Taskbar time={level ? "21:03" : "21:04"} />
      <Sources />
      {level === 0 && <Settings />}
    </Screen>
  );
}

function Level({ n }) {
  return <ThemeProvider theme={() => makeTheme(n)}><Desktop /></ThemeProvider>;
}

export default function App() {
  return (
    <>
      <Global />
      <Level n={0} />
    </>
  );
}
